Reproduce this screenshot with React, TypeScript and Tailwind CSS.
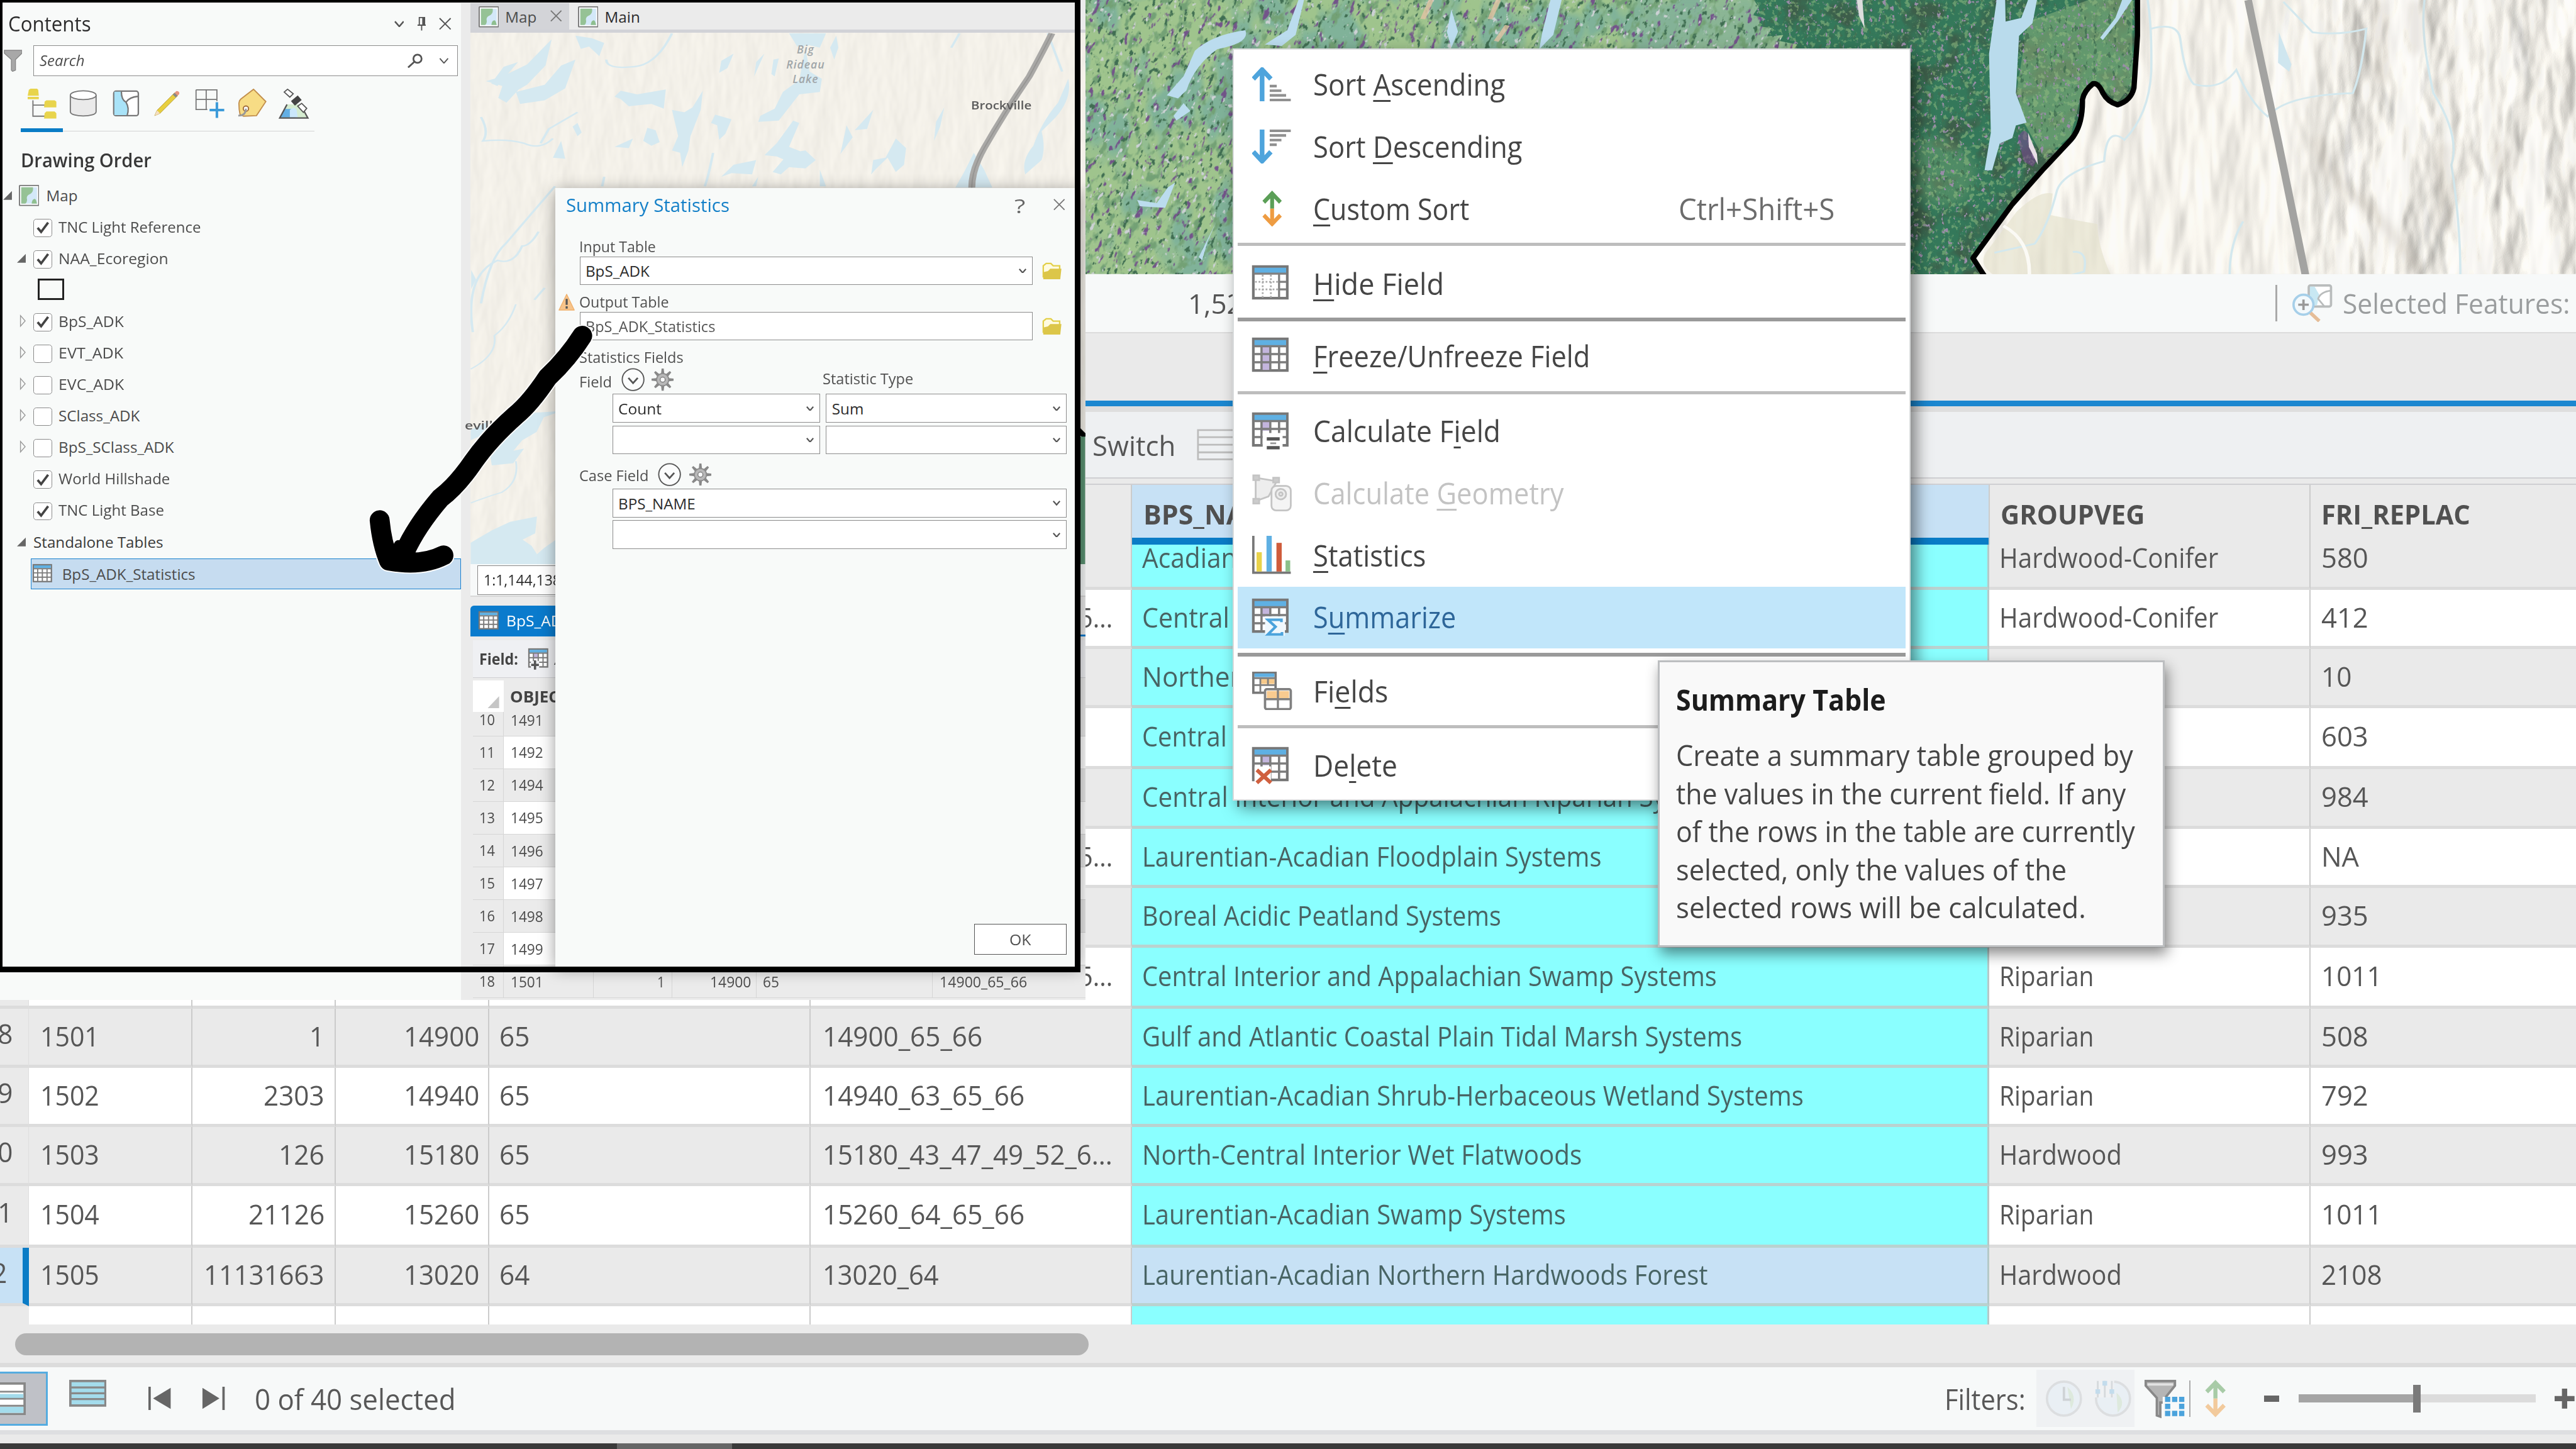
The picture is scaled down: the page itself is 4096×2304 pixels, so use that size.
import { useLayoutEffect, useRef } from "react";
import type { ReactNode } from "react";

function Fit({ w, className = "", children }: { w: number; className?: string; children: ReactNode }) {
  const outer = useRef<HTMLSpanElement>(null);
  const inner = useRef<HTMLSpanElement>(null);
  useLayoutEffect(() => {
    if (outer.current && inner.current) {
      inner.current.style.transform = `scaleX(${outer.current.offsetWidth / inner.current.offsetWidth})`;
    }
  }, [w, children]);
  return (
    <span ref={outer} className={`block shrink-0 whitespace-nowrap ${className}`} style={{ width: w }}>
      <span ref={inner} className="inline-block origin-left whitespace-pre">
        {children}
      </span>
    </span>
  );
}

/* ---------- small icons ---------- */
function Chevron({ className = "", sw = 2 }: { className?: string; sw?: number }) {
  return (
    <svg viewBox="0 0 16 10" className={className} fill="none" stroke="#555" strokeWidth={sw}>
      <path d="M1 1l7 8 7-8" />
    </svg>
  );
}
function Cross({ className = "", color = "#555" }: { className?: string; color?: string }) {
  return (
    <svg viewBox="0 0 20 20" className={className} fill="none" stroke={color} strokeWidth="2">
      <path d="M1 1l18 18M19 1L1 19" />
    </svg>
  );
}
function MapIcon({ className = "" }: { className?: string }) {
  return (
    <svg viewBox="0 0 35 36" className={`h-[36px] w-[35px] shrink-0 ${className}`}>
      <rect x="1" y="1" width="33" height="34" rx="1" fill="#fff" stroke="#777" strokeWidth="2" />
      <rect x="4" y="4" width="27" height="28" fill="#d3e8f8" />
      <path d="M4 4h20c1 6-1 10-6 12-4 2-5 5-4 9 0 3-1 6-3 7H4z" fill="#95c295" />
      <path d="M22 32c0-4 2-8 5-8 2 0 3 4 4 8z" fill="#8fbf8f" />
    </svg>
  );
}
type TableKind = "plain" | "hide" | "freeze" | "calc" | "sum" | "delete" | "add";
function TableIcon({ kind = "plain", className = "" }: { kind?: TableKind; className?: string }) {
  return (
    <svg viewBox="0 0 62 62" preserveAspectRatio="none" className={`shrink-0 overflow-visible ${className}`}>
      <rect x="2" y="2" width="58" height="54" fill="#fff" stroke="#777" strokeWidth="4.500" />
      <rect x="4" y="4" width="54" height="9" fill="#5fb0e3" />
      {kind === "hide" ? (
        <>
          <path d="M4 14h54M46 15v40M46 28h12M46 41h12" stroke="#808080" strokeWidth="3.500" fill="none" />
          <path d="M18 16v40M32 16v40M5 28h40M5 41h40" stroke="#aaa" strokeWidth="3" strokeDasharray="3 3" fill="none" />
        </>
      ) : (
        <>
          {kind !== "plain" && <rect x="16" y="15" width="14" height={kind === "freeze" ? 40 : 16} fill="#c3b5dd" />}
          <path d="M3 14.500h56M3 28h56M3 42h56M16 15v41M31 15v41M46 15v41" stroke="#7c7c7c" strokeWidth="3.800" fill="none" />
        </>
      )}
      {kind === "calc" && (
        <>
          <path d="M18 35h34v28H18z" fill="#fff" />
          <path d="M25 45h22M25 60h22" stroke="#555" strokeWidth="5.500" />
          <path d="M31 52.500h10" stroke="#999" strokeWidth="3" />
        </>
      )}
      {kind === "sum" && (
        <>
          <path d="M22 30h34v33H22z" fill="#f0f8fd" />
          <path d="M50 40v-4H27l13 12-13 13h24v-4" fill="none" stroke="#4ba3dc" strokeWidth="4.500" />
        </>
      )}
      {kind === "delete" && (
        <>
          <path d="M4 33h28v28H4z" fill="#fff" />
          <path d="M8 39l24 22M32 39L8 61" stroke="#d0603f" strokeWidth="6.500" />
        </>
      )}
      {kind === "add" && (
        <>
          <path d="M8 38h26v22H8z" fill="#eff0f3" />
          <path d="M21 36v28M9 50h24" stroke="#555" strokeWidth="7" />
        </>
      )}
    </svg>
  );
}
function SortIcon({ down = false }: { down?: boolean }) {
  return (
    <svg viewBox="0 0 66 58" className="h-[58px] w-[66px]">
      <g transform={down ? "translate(0 58) scale(1 -1)" : undefined}>
        <path d="M17 58V6M2 20L17 4l15 16" fill="none" stroke="#4ea4dc" strokeWidth="8" />
        <path d="M30 56h36M30 48h28M30 40h20M30 32h12" stroke="#909090" strokeWidth="4.500" />
      </g>
    </svg>
  );
}
function UpDown({ className = "" }: { className?: string }) {
  return (
    <svg viewBox="0 0 38 62" preserveAspectRatio="none" className={className} fill="none" strokeWidth="7">
      <path d="M19 31V6M4 20L19 5l15 15" stroke="#5b9f57" />
      <path d="M19 31v25M4 42l15 15 15-15" stroke="#ee9c42" />
    </svg>
  );
}
function GeometryIcon() {
  return (
    <svg viewBox="0 0 68 64" className="h-[64px] w-[68px]" fill="#ededed" stroke="#c4c4c4" strokeWidth="3">
      <path d="M6 6v40l22-8 14-26z" />
      <path d="M2 2h10v8H2zM36 6h10v8H36zM2 42h10v8H2z" fill="#ccc" />
      <rect x="33" y="20" width="33" height="42" rx="8" fill="#f4f4f4" />
      <circle cx="49" cy="34" r="9" />
      <circle cx="49" cy="34" r="3" />
    </svg>
  );
}
function BarsIcon() {
  return (
    <svg viewBox="0 0 66 66" className="h-[66px] w-[66px]">
      <path d="M2 0v63h64" fill="none" stroke="#777" strokeWidth="4" />
      <path d="M12 28v33" stroke="#e9d24a" strokeWidth="9" />
      <path d="M29 0v61" stroke="#5fb0e3" strokeWidth="9" />
      <path d="M46 12v49" stroke="#cf5c3c" strokeWidth="9" />
      <path d="M61 42v19" stroke="#8cc08a" strokeWidth="8" />
    </svg>
  );
}
function FieldsIcon() {
  return (
    <svg viewBox="0 0 68 66" className="h-[66px] w-[68px]" strokeWidth="4">
      <rect x="2" y="2" width="38" height="34" fill="#fff" stroke="#777" />
      <path d="M4 6h34" stroke="#5fb0e3" strokeWidth="6" />
      <path d="M14 12h24v9H14z" fill="#f6c98b" />
      <path d="M3 11h37M3 23h37M14 11v25M27 11v12" stroke="#808080" strokeWidth="3" fill="none" />
      <rect x="22" y="30" width="44" height="34" rx="3" fill="#fff" stroke="#808080" />
      <path d="M25 33h38v12H25z" fill="#f9cb90" />
      <path d="M23 47h42M44 31v33" stroke="#808080" strokeWidth="3.500" />
    </svg>
  );
}
function Folder() {
  return (
    <svg viewBox="0 0 35 30" className="h-[30px] w-[35px] shrink-0">
      <path d="M2 26V6l5-4h8l4 4h11v7" fill="#fffbe0" stroke="#e3d04a" strokeWidth="2.500" />
      <path d="M2 29V17l8-2 4-4h19l-2 18z" fill="#dcc649" />
    </svg>
  );
}
function Gear() {
  return (
    <svg viewBox="-20 -20 40 40" className="h-[38px] w-[38px]">
      {[0, 45, 90, 135].map((a) => (
        <path key={a} d="M-1-19h2L3 0 1 19h-2L-3 0z" fill="#888" stroke="#888" strokeWidth="2" transform={`rotate(${a})`} />
      ))}
      <circle r="12" fill="#8c8c8c" />
      <circle r="10" fill="#b8b8b8" />
      <circle r="4.500" fill="#f8f9f9" stroke="#777" strokeWidth="1.500" />
    </svg>
  );
}
function CircleChevron() {
  return (
    <svg viewBox="0 0 40 40" className="h-[40px] w-[40px]" fill="none" stroke="#555">
      <circle cx="20" cy="20" r="18.500" strokeWidth="2" fill="#fbfcfc" />
      <path d="M12 17l8 9 8-9" strokeWidth="3" />
    </svg>
  );
}

/* ---------- maps ---------- */
function Noise({ id, fx, fy, seed, rgb, k, t }: { id: string; fx: number; fy: number; seed: number; rgb: [number, number, number]; k: number; t: number }) {
  return (
    <filter id={id} x="0" y="0" width="100%" height="100%" colorInterpolationFilters="sRGB">
      <feTurbulence type="fractalNoise" baseFrequency={`${fx} ${fy}`} numOctaves="3" seed={seed} />
      <feColorMatrix type="matrix" values={`0 0 0 0 ${rgb[0]} 0 0 0 0 ${rgb[1]} 0 0 0 0 ${rgb[2]} ${k} 0 0 0 ${-k * t}`} />
      <feComposite in2="SourceGraphic" operator="in" />
    </filter>
  );
}
function LandCoverMap() {
  const dark = "M2996 0H3650V61L3645 147Q3642 176 3617 180Q3600 176 3594 162Q3586 142 3575 144L3558 168L3552 202L3537 239L3491 288L3437 349L3370 441L3390 470H3100V100L3060 90 3070 76 3040 70 3046 60 3018 62 3026 48 3002 44 3012 30 2994 26 3004 12z";
  return (
    <svg viewBox="0 0 4400 468" className="block h-[468px] w-[4400px] shrink-0">
      <defs>
        <Noise id="teal" fx={0.014} fy={0.008} seed={4} rgb={[0.5, 0.7, 0.6]} k={7} t={0.47} />
        <Noise id="olive" fx={0.07} fy={0.045} seed={9} rgb={[0.45, 0.63, 0.46]} k={6} t={0.54} />
        <Noise id="purple" fx={0.1} fy={0.045} seed={21} rgb={[0.45, 0.33, 0.54]} k={12} t={0.655} />
        <Noise id="deep" fx={0.12} fy={0.07} seed={33} rgb={[0.25, 0.43, 0.32]} k={12} t={0.64} />
        <Noise id="pink" fx={0.12} fy={0.07} seed={45} rgb={[0.8, 0.82, 0.83]} k={12} t={0.68} />
        <Noise id="fleck" fx={0.11} fy={0.11} seed={51} rgb={[0.6, 0.76, 0.52]} k={9} t={0.56} />
        <Noise id="spark" fx={0.13} fy={0.1} seed={61} rgb={[0.6, 0.55, 0.66]} k={12} t={0.67} />
        <Noise id="shade" fx={0.02} fy={0.02} seed={71} rgb={[0.24, 0.37, 0.29]} k={5} t={0.5} />
        <filter id="relief" x="0" y="0" width="100%" height="100%" colorInterpolationFilters="sRGB">
          <feTurbulence type="fractalNoise" baseFrequency="0.018 0.005" numOctaves="3" seed="12" result="n" />
          <feDiffuseLighting in="n" surfaceScale="5" diffuseConstant="1.15" lightingColor="#f8f5ee" result="l">
            <feDistantLight azimuth="190" elevation="60" />
          </feDiffuseLighting>
          <feComposite in="l" in2="SourceGraphic" operator="in" />
        </filter>
        <filter id="ridge" x="0" y="0" width="100%" height="100%" colorInterpolationFilters="sRGB">
          <feTurbulence type="fractalNoise" baseFrequency="0.009 0.004" numOctaves="4" seed="31" result="n" />
          <feDiffuseLighting in="n" surfaceScale="22" diffuseConstant="1.15" lightingColor="#f7f4ed" result="l">
            <feDistantLight azimuth="190" elevation="60" />
          </feDiffuseLighting>
          <feComposite in="l" in2="SourceGraphic" operator="in" />
        </filter>
        <linearGradient id="rise" x1="0" x2="1">
          <stop offset="0" stopColor="#fff" stopOpacity="0" />
          <stop offset=".3" stopColor="#fff" stopOpacity="1" />
        </linearGradient>
        <filter id="edge"><feGaussianBlur stdDeviation="12" /></filter>
      </defs>
      <rect width="3300" height="468" fill="#9fc48d" />
      <rect x="1800" width="1400" height="468" filter="url(#teal)" />
      <path d="M2800 0h230v100h-240z" fill="#86b297" opacity=".8" filter="url(#edge)" />
      <g transform="rotate(24 2200 200)">
        <rect x="1600" y="-600" width="1500" height="1400" filter="url(#olive)" />
        <rect x="1600" y="-600" width="1500" height="1400" filter="url(#deep)" />
        <rect x="1600" y="-600" width="1500" height="1400" filter="url(#purple)" />
        <rect x="1600" y="-600" width="1500" height="1400" filter="url(#pink)" />
      </g>
      <rect x="3300" width="1100" height="468" fill="#f3f0e8" />
      <rect x="3300" width="1100" height="468" filter="url(#relief)" opacity=".7" />
      <rect x="3860" width="540" height="468" fill="url(#rise)" filter="url(#ridge)" opacity=".5" />
      <path d={dark} fill="#34785a" />
      <path d={dark} filter="url(#shade)" />
      <path d={dark} filter="url(#fleck)" opacity=".5" />
      <g transform="translate(3200 0) scale(.7653 .6122)">
        <path d="M345 60L480 0H578V235L545 285 490 225 462 275 440 380 380 440 335 340 320 250z" fill="#8fb87f" opacity=".5" />
        <path d="M90 400q60-40 110 20t0 140q-60 30-100-20z" fill="#8fb87f" opacity=".3" filter="url(#edge)" />
      </g>
      <path d={dark} filter="url(#deep)" opacity=".8" />
      <path d={dark} filter="url(#spark)" />
      <g transform="translate(3200 0) scale(.7653 .6122)">
        <path d="M275 0L258 150 262 370 248 475H265L282 400 310 385 318 350 342 342 318 260 325 100 355 65 365 0H345L330 50 295 60 294 0z" fill="#b9dbec" />
        <path d="M555 0h22L545 60 512 112 506 105 540 50z" fill="#b9dbec" />
        <path d="M322 385q16-40 26 0l18 60-10 20-20-14z" fill="#744a8e" opacity=".6" />
        <path d="M345 370l20 60 2 30-20-50z" fill="#e8dfe6" />
        <path d="M320 590q50-60 80-50l-5 60 60 15 45 10q0 60 30 143H270q-40-30-15-70z" fill="#e6e2cf" opacity=".7" />
        <g fill="none" stroke="#d3e8ee" strokeWidth="5">
          <path d="M612 0q10 80 8 200-5 120-60 190-40-40-45 60-90 30-105 80-20 100-50 150l-90 25" />
          <path d="M620 80q60-20 65 30 10 100 30 125 60 20 95-40 30 90 70 130 40-60 190-65 20-60 30-180-60 20-120 10L915 5" />
          <path d="M1230 0q-10 100 20 260 60 120 40 200 20 160 20 308M795 768q0-90 30-150M440 768l30-10q10-60-25-55" />
        </g>
        <path d="M905 90l28 90-5 20-25-25z" fill="#cfe6ef" />
        <path d="M290 630q60 40 58 138" fill="none" stroke="#fbfaf5" strokeWidth="8" />
        <g fill="none" stroke="#a99f92" strokeWidth="22" opacity=".35" filter="url(#edge)">
          <path d="M1130 0l5 230M1270 400l5 240M990 380q20 130 110 190 60 80 120 190M1210 0v150M1395 400v90" />
        </g>
      </g>
      <path d="M3840 0L3850 49L3892 245L3938 470" fill="none" stroke="#a3a3a1" strokeWidth="13" />
      <path d="M3651 -5V61L3645 150Q3640 172 3617 179Q3600 174 3592 159Q3584 141 3575 143Q3560 155 3557 170Q3558 215 3537 239L3491 288L3437 349L3370 441L3390 472" fill="none" stroke="#000" strokeWidth="9" strokeLinejoin="round" />
      <g transform="translate(1840 0) scale(.9566 .5421)" fill="#bbdcee">
        <path d="M300 95q10 40-50 60-40 50-55 130l-15 25-20-10 30-60 20-80q30-50 90-65zM190 325l12 25-25 30-5-15zM395 0h10l-15 110-25 35-30-5 40-45zM668 30l12 70-12 50-8-50zM845 0h20l-15 110-25 45 5-50zM175 575l-18 80-45-5-5-20 35 10 20-50zM248 700l-15 60-10 60-6-10z" />
        <path d="M1392 0h10l4 90-10-40z" fill="#ddd" />
      </g>
      <g transform="translate(1840 0) scale(.9566 .5421)" fill="none" stroke="#e2c3a4" strokeWidth="9" opacity=".8">
        <path d="M632 0l-15 60M752 0l-15 60M768 80l-20 50" />
      </g>
    </svg>
  );
}
function StreetMap() {
  return (
    <svg viewBox="0 0 1050 908" className="block h-[908px] w-[1050px] shrink-0">
      <defs>
        <filter id="soft" x="0" y="0" width="100%" height="100%" colorInterpolationFilters="sRGB">
          <feTurbulence type="fractalNoise" baseFrequency="0.03 0.012" numOctaves="3" seed="5" result="n" />
          <feDiffuseLighting in="n" surfaceScale="1.2" diffuseConstant="1.120" lightingColor="#f6f3ec">
            <feDistantLight azimuth="200" elevation="62" />
          </feDiffuseLighting>
        </filter>
      </defs>
      <rect width="1050" height="908" fill="#f4f1e9" />
      <rect width="1050" height="908" filter="url(#soft)" opacity=".4" />
      <g transform="translate(-24 -56) scale(.7015 .4082)" fill="#d5e9f1">
        <path d="M290 150l40 10 30 20-12 55-25-40-20 10zM232 165l-15 110-45 80-20 20-30 55-20-20 10-50-40-20 40-20 60-50 40-70zM290 250l-25 120-50 50-60 15-10-50 70-30 40-80zM150 260l-50 100-15-10 30-70zM385 405l15-25 40 15 70-20-5 80-30-20-55 10-20-30zM675 225l-15 60-20 20 5-50zM750 225l-25 95 5-60zM785 245l-10 75-8-10 5-60zM810 140h90l-15 60-25-10-30 5zM925 150l5 50-10 50-10-50z" />
        <path d="M850 200l10 100 30 30-5 55-50 10-50 110-50 5 5-25 35-30 20-70 40-50zM600 380l-5 80-25 110-5 60-15 70-5-60-20-10 15-60-15-110 30 10 20-20zM630 480l40 20-15 60-15 25-5-60-15-10zM820 505l15 10-25 100 30 20-20 50-40-30-30-5 30-50zM850 630l25 40-25 35-40-5-20 30-20-10 40-80zM730 670l-10 60-50-5-25 15 30-50zM465 535l20 10 10 50-20 15-20-20zM1015 460l-15 80-30 5zM950 525l15 50-30 70zM1070 580l25 40-5 70-20 30-20-60-30 50-10 20 5-60 30-10zM1188 450l-10 80-15 60 5-80zM295 515l10 40-10 15-12-40zM430 580l-10 40-35-5zM255 590l-20 70 30 5" />
        <path d="M1260 640l25 70 20 75H1215l20-60zM1490 330q10 80-30 160l-35 60q10 70 0 120l-40 60q-10-60 20-120 20-100 60-180zM735 740l-15 40 10 0zM885 710l15 70h-15z" />
        <g fill="none" stroke="#d5e9f1" strokeWidth="6">
          <path d="M295 470l-70 70-20 60M625 640q-10 90-20 140M60 490q20 60 5 100 60-10 100 10 40 30 70-20M240 780q-80 160-120 240-40 60-60 250M200 970q-20 60-40 60-20 80-60 60-80 60-60 300M215 1205l-25 50M525 140q-40 140-100 140-60 10-60-30M1440 140l35 160M360 740l-5 40M1225 140l-20 60" />
        </g>
        <path d="M1450 140q-20 70-55 180-60 150-110 300-30 90-30 165" fill="none" stroke="#a9a8a6" strokeWidth="17" />
        <path d="M1450 140q-20 70-55 180-60 150-110 300-30 90-30 165" fill="none" stroke="#969593" strokeWidth="3" />
        <path d="M36 1130l12 40-12 40z" />
      </g>
      <g transform="translate(-804 464) scale(.6122 .3571)" fill="#d5e9f1">
        <path d="M1568 510l-50 30-20 70-40 40-25 50 30-10-30 70-60 10-5-50 40-120 70-80zM1314 600l50-40-10 60-40 30zM1314 1140l60-60 50-40 75-25-5 80-35 30 25 30 15 40 20-30 50-60V1250H1314z" />
        <path d="M1440 0q-20 100-60 150 10 90-66 160M1440 750q10 100-40 150-40 20-86 50" fill="none" stroke="#d5e9f1" strokeWidth="5" />
      </g>
      <path d="M1030 670l20 20" stroke="#000" strokeWidth="9" />
      <path d="M1036 690h14v218h-14z" fill="#5c9474" />
    </svg>
  );
}

/* ---------- main attribute table ---------- */
type Cell = { t: string; w: number };
type Row = { i: string; id?: string; c?: Cell; v?: string; p?: string; key?: Cell; name: Cell; g?: Cell; fri: Cell; h: number; alt: boolean; first?: boolean; sel?: boolean };
const HC = { t: "Hardwood-Conifer", w: 374 };
const RIP = { t: "Riparian", w: 162 };
const HW = { t: "Hardwood", w: 209 };
const CUT = { t: "5...", w: 58 };
const rows: Row[] = [
  { i: "", name: { t: "Acadian Low-Elevation Hardwood Forest", w: 820 }, g: HC, fri: { t: "580", w: 80 }, h: 78, alt: true, first: true },
  { i: "", key: CUT, name: { t: "Central Interior and Appalachian Forest", w: 810 }, g: HC, fri: { t: "412", w: 80 }, h: 101, alt: false },
  { i: "", name: { t: "Northern Appalachian Spruce-Fir Forest", w: 840 }, fri: { t: "10", w: 52 }, h: 101, alt: true },
  { i: "", name: { t: "Central Appalachian Pine Woodland", w: 715 }, fri: { t: "603", w: 80 }, h: 104, alt: false },
  { i: "", name: { t: "Central Interior and Appalachian Riparian Systems", w: 1016 }, fri: { t: "984", w: 80 }, h: 102, alt: true },
  { i: "", key: CUT, name: { t: "Laurentian-Acadian Floodplain Systems", w: 785 }, fri: { t: "NA", w: 64 }, h: 101, alt: false },
  { i: "", name: { t: "Boreal Acidic Peatland Systems", w: 613 }, fri: { t: "935", w: 80 }, h: 102, alt: true },
  { i: "", key: CUT, name: { t: "Central Interior and Appalachian Swamp Systems", w: 982 }, g: RIP, fri: { t: "1011", w: 104 }, h: 104, alt: false },
  { i: "18", id: "1501", c: { t: "1", w: 25 }, v: "14900", p: "65", key: { t: "14900_65_66", w: 273 }, name: { t: "Gulf and Atlantic Coastal Plain Tidal Marsh Systems", w: 1025 }, g: RIP, fri: { t: "508", w: 80 }, h: 101, alt: true },
  { i: "19", id: "1502", c: { t: "2303", w: 104 }, v: "14940", p: "65", key: { t: "14940_63_65_66", w: 345 }, name: { t: "Laurentian-Acadian Shrub-Herbaceous Wetland Systems", w: 1130 }, g: RIP, fri: { t: "792", w: 80 }, h: 101, alt: false },
  { i: "20", id: "1503", c: { t: "126", w: 78 }, v: "15180", p: "65", key: { t: "15180_43_47_49_52_6...", w: 495 }, name: { t: "North-Central Interior Wet Flatwoods", w: 751 }, g: HW, fri: { t: "993", w: 80 }, h: 101, alt: true },
  { i: "21", id: "1504", c: { t: "21126", w: 130 }, v: "15260", p: "65", key: { t: "15260_64_65_66", w: 345 }, name: { t: "Laurentian-Acadian Swamp Systems", w: 724 }, g: RIP, fri: { t: "1011", w: 104 }, h: 105, alt: false },
  { i: "22", id: "1505", c: { t: "11131663", w: 206 }, v: "13020", p: "64", key: { t: "13020_64", w: 198 }, name: { t: "Laurentian-Acadian Northern Hardwoods Forest", w: 966 }, g: HW, fri: { t: "2108", w: 104 }, h: 100, alt: true, sel: true },
];

function BodyCell({ row, className = "", children }: { row: Row; className?: string; children?: ReactNode }) {
  return (
    <div className={`flex shrink-0 items-center overflow-hidden border-r-[3px] border-b-[6px] border-r-[#cbcbcb] border-b-[#dcdcdc] ${row.alt ? "bg-[#eaeaea]" : "bg-white"} ${row.first ? "pb-[29px]" : "pb-[3px]"} ${className}`}>
      {children}
    </div>
  );
}
function MainTable() {
  return (
    <div className="flex h-[1434px] shrink-0 flex-col overflow-hidden bg-[#eaeaea] text-[48px] leading-none text-[#565656]">
      <div className="flex h-[102px] shrink-0 text-[47px] font-bold text-[#505050]">
        <div className="w-[1934px] shrink-0 border-r-[3px] border-[#cbcbcb]" />
        <div className="flex w-[1463px] shrink-0 items-center border-b-[12px] border-[#0a7cc6] bg-[#c7e1f5] pt-[12px] pl-[19px]">
          <Fit w={243}>BPS_NAME</Fit>
        </div>
        <div className="flex w-[550px] shrink-0 items-center border-x-[3px] border-[#cbcbcb] pl-[18px]">
          <Fit w={246}>GROUPVEG</Fit>
        </div>
        <div className="flex items-center pl-[18px]">
          <Fit w={254}>FRI_REPLAC</Fit>
        </div>
      </div>
      {rows.map((r, n) => (
        <div key={n} className="flex shrink-0" style={{ height: r.h }}>
          <div className={`flex w-[49px] shrink-0 items-center justify-end border-b-[6px] border-b-[#dcdcdc] pr-[26px] pb-[10px] ${r.sel ? "border-r-[11px] border-r-[#0a7cc6] bg-[#c7e1f5] pr-[19px]" : "border-r-[2px] border-r-[#dfdfdf]"}`}>
            <Fit w={52}>{r.i || " "}</Fit>
          </div>
          <BodyCell row={r} className="w-[280px] pl-[20px]">{r.id && <Fit w={101}>{r.id}</Fit>}</BodyCell>
          <BodyCell row={r} className="w-[245px] justify-end pr-[18px]">{r.c && <Fit w={r.c.w}>{r.c.t}</Fit>}</BodyCell>
          <BodyCell row={r} className="w-[262px] justify-end pr-[15px]">{r.v && <Fit w={129}>{r.v}</Fit>}</BodyCell>
          <BodyCell row={r} className="w-[549px] pl-[17px]">{r.p && <Fit w={52}>{r.p}</Fit>}</BodyCell>
          <BodyCell row={r} className={`w-[549px] ${r.key === CUT ? "justify-end pr-[32px]" : "pl-[20px]"}`}>{r.key && <Fit w={r.key.w}>{r.key.t}</Fit>}</BodyCell>
          <div className={`flex w-[1464px] shrink-0 items-center overflow-hidden border-r-[4px] border-b-[6px] border-r-[#b5c9c8] border-b-[#b9d2d0] pl-[17px] text-[#486464] ${r.sel ? "bg-[#c7e1f5]" : "bg-[#8affff]"} ${r.first ? "pb-[29px]" : "pb-[3px]"}`}>
            <Fit w={r.name.w}>{r.name.t}</Fit>
          </div>
          <BodyCell row={r} className="w-[549px] pl-[17px]">{r.g && <Fit w={r.g.w}>{r.g.t}</Fit>}</BodyCell>
          <BodyCell row={r} className="w-[457px] pl-[18px]"><Fit w={r.fri.w}>{r.fri.t}</Fit></BodyCell>
        </div>
      ))}
      <div className="flex h-[31px] shrink-0">
        <div className="w-[49px]" />
        <div className="w-[280px] border-r-[3px] border-[#cbcbcb] bg-white" />
        <div className="w-[245px] border-r-[3px] border-[#cbcbcb] bg-white" />
        <div className="w-[262px] border-r-[3px] border-[#cbcbcb] bg-white" />
        <div className="w-[549px] border-r-[3px] border-[#cbcbcb] bg-white" />
        <div className="w-[549px] border-r-[3px] border-[#cbcbcb] bg-white" />
        <div className="w-[1464px] border-r-[4px] border-[#b5c9c8] bg-[#8affff]" />
        <div className="w-[549px] border-r-[3px] border-[#cbcbcb] bg-white" />
        <div className="w-[453px] bg-white" />
      </div>
    </div>
  );
}

function StatusBar() {
  return (
    <div className="flex h-[101px] shrink-0 items-center border-b-[3px] border-[#dcdcdc] bg-[#f7f9f9] text-[48px] text-[#555]">
      <div className="w-[2029px] shrink-0" />
      <div className="w-[1858px] shrink-0"><Fit w={120}>1,523</Fit></div>
      <div className="h-[62px] w-[3px] bg-[#aaa]" />
      <svg viewBox="0 0 70 66" className="ml-[26px] h-[66px] w-[70px] shrink-0" fill="none">
        <rect x="28" y="3" width="38" height="36" rx="3" stroke="#b9bcbc" strokeWidth="4" fill="#fff" />
        <path d="M30 5h8l8 14-4 18H30z" fill="#c8e8f3" />
        <path d="M66 12q-18 2-22 14l10 12" stroke="#b9bcbc" strokeWidth="3" />
        <circle cx="19" cy="36" r="17" stroke="#a6cfe9" strokeWidth="4" fill="#f3f9fc" />
        <path d="M19 27v18M10 36h18" stroke="#999" strokeWidth="4" />
        <path d="M31 50l15 14" stroke="#e5bd98" strokeWidth="6" />
      </svg>
      <Fit w={388} className="ml-[15px] text-[#9a9d9e]">Selected Features:</Fit>
    </div>
  );
}

function FooterBar() {
  return (
    <div className="flex h-[108px] shrink-0 items-center bg-[#f7f9f9] text-[49px] text-[#585858]">
      <div className="flex h-[93px] w-[82px] items-center border-[4px] border-l-0 border-[#55ace0] bg-[#bfc1c7]">
        <svg viewBox="0 0 46 56" className="h-[56px] w-[46px]">
          <path d="M-4 2h46v52H-4z" fill="#fff" stroke="#888" strokeWidth="4" />
          <path d="M0 20h40v9H0zM0 42h40v10H0z" fill="#a4dcec" />
          <path d="M0 16h42M0 28h42M0 40h42" stroke="#888" strokeWidth="3" />
        </svg>
      </div>
      <svg viewBox="0 0 64 46" className="mb-[18px] ml-[36px] h-[46px] w-[64px]">
        <path d="M2 2h60v42H2z" fill="#a4dcec" stroke="#888" strokeWidth="4" />
        <path d="M2 13h60M2 23h60M2 33h60" stroke="#888" strokeWidth="3.500" />
      </svg>
      <svg viewBox="0 0 40 40" className="ml-[71px] h-[40px] w-[40px]" fill="#666">
        <path d="M0 0h4v40H0zM38 2v36L8 20z" />
      </svg>
      <svg viewBox="0 0 40 40" className="ml-[52px] h-[40px] w-[40px]" fill="#666">
        <path d="M35 0h4v40h-4zM1 2v36l29-18z" />
      </svg>
      <Fit w={343} className="ml-[50px]">0 of 40 selected</Fit>
      <Fit w={138} className="ml-[2544px]">Filters:</Fit>
      <div className="ml-[18px] flex h-[98px] w-[168px] shrink-0 items-center gap-[20px] bg-[#eff1f3] pl-[15px]">
        <svg viewBox="0 0 64 64" className="h-[64px] w-[64px]" fill="none">
          <circle cx="32" cy="32" r="29" stroke="#dcdee0" strokeWidth="4" fill="#e9eff4" />
          <path d="M38 12q18 16 6 38z" fill="#dde9dd" />
          <path d="M32 12v22h12" stroke="#cfd3d6" strokeWidth="4" />
        </svg>
        <svg viewBox="0 0 64 64" className="h-[64px] w-[64px]" fill="none">
          <circle cx="32" cy="32" r="29" stroke="#dcdee0" strokeWidth="4" fill="#e9eff4" />
          <path d="M0 0h34v30H0z" fill="#eff1f3" />
          <path d="M38 22q18 16 2 34z" fill="#dde9dd" />
          <path d="M6 2v28M18 2v28M30 2v28" stroke="#d5d9dc" strokeWidth="3" />
          <path d="M18 2v8M6 16v8M30 16v8" stroke="#c3dcec" strokeWidth="8" />
        </svg>
      </div>
      <svg viewBox="0 0 70 66" className="ml-[16px] h-[66px] w-[70px] shrink-0" fill="none">
        <path d="M3 3h50v8L36 32v8h-8v24l-6-2V32L3 11z" fill="#b5b5b5" stroke="#888" strokeWidth="4" />
        <path d="M6 9h44" stroke="#e2e2e2" strokeWidth="4" />
        <path d="M32 30h38v36H32z" fill="#f7f9f9" />
        <path d="M36 30h9v9h-9zM48 30h9v9h-9zM60 30h9v9h-9zM36 42h9v9h-9zM60 42h9v9h-9zM36 54h9v9h-9zM48 54h9v9h-9zM60 54h9v9h-9z" fill="#4ba3dc" />
      </svg>
      <div className="ml-[7px] h-[62px] w-[3px] bg-[#aaa]" />
      <UpDown className="ml-[23px] h-[64px] w-[38px] opacity-50" />
      <div className="ml-[64px] h-[10px] w-[26px] bg-[#666]" />
      <div className="relative ml-[33px] h-[14px] w-[405px] bg-[#dcdcdc]">
        <div className="h-[14px] w-[200px] bg-[#a5a5a5]" />
        <div className="absolute -top-[17px] left-[196px] h-[48px] w-[13px] bg-[#7a7a7a]" />
      </div>
      <svg viewBox="0 0 34 34" className="ml-[33px] h-[34px] w-[34px] shrink-0">
        <path d="M17 0v34M0 17h34" stroke="#666" strokeWidth="9" />
      </svg>
    </div>
  );
}

/* ---------- context menu ---------- */
type Item = { a?: string; u: string; b?: string; w: number; icon: ReactNode; short?: string; off?: boolean; hot?: boolean };
function MenuItem({ a = "", u, b = "", w, icon, short, off, hot }: Item) {
  return (
    <div className={`flex h-[106px] shrink-0 items-center pb-[2px] pl-[25px] ${hot ? "bg-[#c1e6fa] text-[#2e6699]" : off ? "text-[#c3c3c3]" : "text-[#454545]"}`}>
      <div className="flex w-[104px] shrink-0 items-center">{icon}</div>
      <Fit w={w}>
        {a}
        <span className="underline decoration-[3px] underline-offset-[7px]">{u}</span>
        {b}
      </Fit>
      {short && <Fit w={267} className="mr-[121px] ml-auto text-[#6c6c6c]">{short}</Fit>}
    </div>
  );
}
function Sep({ dark = false, pt, pb }: { dark?: boolean; pt: string; pb: string }) {
  return (
    <div className={`${pt} ${pb}`}>
      <div className={dark ? "h-[7px] bg-[#9a9a9a]" : "h-[5px] bg-[#bdbdbd]"} />
    </div>
  );
}
const ti = "h-[62px] w-[62px]";
function ContextMenu() {
  return (
    <div className="absolute top-[83px] left-[2106px] flex h-[1284px] w-[1157px] flex-col border-[3px] border-[#d8dbdc] bg-white px-[6px] pt-[7px] text-[51px] leading-none shadow-[10px_12px_26px_rgba(0,0,0,0.5)]">
      <MenuItem a="Sort " u="A" b="scending" w={328} icon={<SortIcon />} />
      <MenuItem a="Sort " u="D" b="escending" w={357} icon={<SortIcon down />} />
      <MenuItem u="C" b="ustom Sort" w={267} icon={<UpDown className="ml-[16px] h-[62px] w-[36px]" />} short="Ctrl+Shift+S" />
      <Sep pt="pt-[5px]" pb="pb-[12px]" />
      <MenuItem u="H" b="ide Field" w={223} icon={<TableIcon kind="hide" className={ti} />} />
      <Sep dark pt="pt-[4px]" pb="pb-[7px]" />
      <MenuItem u="F" b="reeze/Unfreeze Field" w={473} icon={<TableIcon kind="freeze" className={ti} />} />
      <Sep pt="pt-[6px]" pb="pb-[11px]" />
      <MenuItem a="Calculate F" u="i" b="eld" w={320} icon={<TableIcon kind="calc" className={ti} />} />
      <MenuItem a="Calculate " u="G" b="eometry" w={428} icon={<GeometryIcon />} off />
      <MenuItem u="S" b="tatistics" w={193} icon={<BarsIcon />} />
      <MenuItem a="S" u="u" b="mmarize" w={244} icon={<TableIcon kind="sum" className={ti} />} hot />
      <Sep dark pt="pt-[7px]" pb="pb-[6px]" />
      <MenuItem a="Fi" u="e" b="lds" w={128} icon={<FieldsIcon />} />
      <Sep pt="pt-[5px]" pb="pb-[11px]" />
      <MenuItem a="De" u="l" b="ete" w={144} icon={<TableIcon kind="delete" className={ti} />} />
    </div>
  );
}
function Tooltip() {
  return (
    <div className="absolute top-[1128px] left-[2832px] h-[490px] w-[866px] border-[4px] border-[#bcbec0] bg-[#f9f9f9] pl-[28px] text-[50px] leading-[65px] text-[#454545] shadow-[4px_12px_22px_rgba(0,0,0,0.45)]">
      <Fit w={358} className="mt-[31px] mb-[30px] font-bold text-[#1c1c1c]">Summary Table</Fit>
      <Fit w={781}>Create a summary table grouped by</Fit>
      <Fit w={768}>the values in the current field. If any</Fit>
      <Fit w={784}>of the rows in the table are currently</Fit>
      <Fit w={667}>selected, only the values of the</Fit>
      <Fit w={700}>selected rows will be calculated.</Fit>
    </div>
  );
}

/* ---------- contents pane ---------- */
function Check({ on }: { on: boolean }) {
  return (
    <div className="mt-[3px] flex h-[31px] w-[32px] shrink-0 items-center justify-center rounded-[5px] border-[2px] border-[#8a8a8a] bg-white">
      {on && (
        <svg viewBox="0 0 22 22" className="h-[22px] w-[24px]" fill="none" stroke="#444" strokeWidth="4">
          <path d="M2 11l6 7L20 2" />
        </svg>
      )}
    </div>
  );
}
type Arrow = "open" | "closed" | "none";
function Expander({ kind }: { kind: Arrow }) {
  return (
    <svg viewBox="0 0 16 24" className="h-[24px] w-[16px] shrink-0">
      {kind === "open" && <path d="M15 4v15H0z" fill="#666" />}
      {kind === "closed" && <path d="M6 2v18l8-9z" fill="none" stroke="#999" strokeWidth="1.500" />}
    </svg>
  );
}
const layers: { t: string; w: number; on: boolean; a: Arrow; swatch?: boolean }[] = [
  { t: "TNC Light Reference", w: 243, on: true, a: "none" },
  { t: "NAA_Ecoregion", w: 188, on: true, a: "open", swatch: true },
  { t: "BpS_ADK", w: 112, on: true, a: "closed" },
  { t: "EVT_ADK", w: 111, on: false, a: "closed" },
  { t: "EVC_ADK", w: 112, on: false, a: "closed" },
  { t: "SClass_ADK", w: 139, on: false, a: "closed" },
  { t: "BpS_SClass_ADK", w: 197, on: false, a: "closed" },
  { t: "World Hillshade", w: 191, on: true, a: "none" },
  { t: "TNC Light Base", w: 180, on: true, a: "none" },
];
function ToolIcons() {
  return (
    <div className="flex h-[88px] items-start pt-[22px] pl-[42px]">
      <svg viewBox="0 0 50 52" className="h-[52px] w-[50px]">
        <path d="M9 20v27h22M9 28h22" fill="none" stroke="#777" strokeWidth="2" />
        <path d="M2 2l3-2h11l2 2 1 10H0zM0 14h19v4H0zM29 22l3-2h14l3 2v10H28zM29 42l3-3h14l3 3v9H28z" fill="#e8d44c" />
      </svg>
      <svg viewBox="0 0 48 46" className="mt-[2px] ml-[21px] h-[46px] w-[48px]" fill="#eaeaea" stroke="#777" strokeWidth="2">
        <path d="M2 9v28c0 10 44 10 44 0V9" />
        <ellipse cx="24" cy="9" rx="22" ry="7.500" fill="#fff" />
      </svg>
      <svg viewBox="0 0 46 46" className="mt-[2px] ml-[26px] h-[46px] w-[46px]" fill="none" stroke="#777" strokeWidth="2.500">
        <rect x="2" y="2" width="42" height="42" rx="4" fill="#fff" />
        <path d="M3 3h12q0 14 8 18 6 10 2 22H3z" fill="#a9e3f8" stroke="none" />
        <path d="M15 3q0 14 8 18 6 10 2 22M23 21q6-9 20-10" />
      </svg>
      <svg viewBox="0 0 46 46" className="mt-[2px] ml-[25px] h-[46px] w-[46px]">
        <path d="M1 44l4-9 30-30 5 5-30 30z" fill="#e8cf3f" stroke="#b69a30" strokeWidth="1" />
        <path d="M35 5l3-3q6 0 5 5l-3 3z" fill="#e7957f" />
        <path d="M32 8l3-3 5 5-3 3z" fill="#888" />
        <path d="M1 44l4-9 5 5z" fill="#f5dfc4" />
      </svg>
      <svg viewBox="0 0 54 54" className="ml-[23px] h-[52px] w-[54px]" fill="none">
        <path d="M2 2h37v20M2 2v35h20M2 19h37M20 2v35" stroke="#777" strokeWidth="2" />
        <path d="M39 24v28M26 38h26" stroke="#3d9bd9" strokeWidth="4.500" />
      </svg>
      <svg viewBox="0 0 50 50" className="ml-[20px] h-[50px] w-[50px]">
        <path d="M2 25Q2 21 5 18L27 1l21 21-16 24-22 1-6-3q-2-8-2-19z" fill="#f7dc85" stroke="#c28f4d" strokeWidth="2" />
        <circle cx="14" cy="34" r="4.500" fill="#fff" stroke="#a06a35" strokeWidth="2" />
        <path d="M14 34q0 12-13 12" fill="none" stroke="#999" strokeWidth="3" />
      </svg>
      <svg viewBox="0 0 54 54" className="ml-[19px] h-[52px] w-[54px]">
        <path d="M16 28h24l12 24H2z" fill="#d5ecd0" />
        <path d="M10 36h20v15H3z" fill="#63afe4" />
        <path d="M20 38q8-8 12 0l2 13H20z" fill="#cbe7fa" />
        <path d="M15 28L2 52h50L42 34" fill="none" stroke="#555" strokeWidth="2.500" />
        <path d="M22 22l12-10 7 8-12 10z" fill="#444" />
        <path d="M10 6l6-5 10 8-6 6zM34 31l7-5 9 9-6 7z" fill="#fff" stroke="#555" strokeWidth="2" />
      </svg>
    </div>
  );
}
function ContentsPane() {
  return (
    <div className="flex w-[787px] shrink-0 flex-col bg-[#f8faf9] pl-[5px] text-[26px] leading-none text-[#4c4c4c]">
      <div className="flex h-[72px] shrink-0 items-center pl-[9px] text-[35px] text-[#2d2d2d]">
        <Fit w={141}>Contents</Fit>
        <Chevron className="mr-[22px] ml-auto h-[11px] w-[17px]" sw={2.5} />
        <svg viewBox="0 0 16 24" className="mr-[22px] h-[24px] w-[16px]" fill="none" stroke="#555" strokeWidth="2">
          <path d="M4 1h9v13H4zM1 14h14M8 14v9" />
          <path d="M11 1v13" strokeWidth="4" />
        </svg>
        <Cross className="mr-[16px] h-[21px] w-[21px]" />
      </div>
      <div className="flex h-[53px] shrink-0 items-center">
        <svg viewBox="0 0 32 38" className="mr-[19px] ml-[1px] h-[38px] w-[32px]">
          <path d="M1 1h30v5L20 17v18l-5 2-2-2V17L1 6z" fill="#a8a8a8" stroke="#888" strokeWidth="1.500" />
        </svg>
        <div className="flex h-[53px] w-[725px] items-center border-[2px] border-[#8c8c8c] bg-white pl-[10px] italic">
          <Fit w={77}>Search</Fit>
          <svg viewBox="0 0 26 25" className="mr-[28px] ml-auto h-[25px] w-[26px]" fill="none" stroke="#555" strokeWidth="3">
            <circle cx="17" cy="9" r="7" />
            <path d="M12 14L1 24" />
          </svg>
          <Chevron className="mr-[14px] h-[10px] w-[17px]" />
        </div>
      </div>
      <ToolIcons />
      <div className="ml-[30px] flex h-[7px] w-[502px] shrink-0 items-end border-b-[2px] border-[#d4d4d4]">
        <div className="-mb-[2px] h-[7px] w-[72px] bg-[#0a7cc6]" />
      </div>
      <div className="h-[83px] shrink-0 pt-[33px] pl-[31px] text-[32px] font-semibold text-[#383838]">
        <Fit w={223}>Drawing Order</Fit>
      </div>
      <div className="flex h-[53.800px] shrink-0 items-center pb-[2px]">
        <Expander kind="open" />
        <MapIcon className="ml-[11px]" />
        <Fit w={54} className="ml-[12px]">Map</Fit>
      </div>
      {layers.map((l) => (
        <div key={l.t} className="shrink-0">
          <div className="flex h-[53.800px] items-center pb-[2px]">
            <div className="ml-[24px] flex"><Expander kind={l.a} /></div>
            <div className="ml-[12px]"><Check on={l.on} /></div>
            <Fit w={l.w} className="ml-[11px]">{l.t}</Fit>
          </div>
          {l.swatch && (
            <div className="flex h-[53.800px] items-center pb-[4px] pl-[60px]">
              <div className="h-[37px] w-[45px] border-[4px] border-[#222] bg-[#f8faf9]" />
            </div>
          )}
        </div>
      ))}
      <div className="flex h-[53.800px] shrink-0 items-center pl-[24px] text-[#3a3a3a]">
        <Expander kind="open" />
        <Fit w={222} className="ml-[12px]">Standalone Tables</Fit>
      </div>
      <div className="ml-[48px] flex h-[53px] shrink-0 items-center border-[2px] border-[#1b81ce] bg-[#c6dcf0] pl-[2px]">
        <TableIcon className="h-[33px] w-[33px]" />
        <Fit w={228} className="ml-[17px] pt-[1px]">BpS_ADK_Statistics</Fit>
      </div>
    </div>
  );
}

/* ---------- inset map and table ---------- */
const insetRows = [
  ["10", "1491"], ["11", "1492"], ["12", "1494"], ["13", "1495"], ["14", "1496"], ["15", "1497"], ["16", "1498"], ["17", "1499"], ["18", "1501"],
];
function InsetView() {
  return (
    <div className="flex w-[1067px] shrink-0 flex-col bg-[#ebebeb] pl-[17px] text-[26px] leading-none text-[#4c4c4c]">
      <div className="flex h-[51px] shrink-0 border-b-[6px] border-[#d1d2d7]">
        <div className="flex w-[168px] items-center bg-[#d3d4d8] pt-[2px] pl-[13px]">
          <MapIcon />
          <Fit w={54} className="ml-[11px]">Map</Fit>
          <Cross className="mb-[4px] ml-[22px] h-[20px] w-[22px]" color="#777" />
        </div>
        <div className="flex items-center pt-[2px] pl-[15px] text-[#2c2c2c]">
          <MapIcon />
          <Fit w={60} className="ml-[11px]">Main</Fit>
        </div>
      </div>
      <div className="relative h-[908px] shrink-0">
        <StreetMap />
        <div className="absolute top-[16px] left-[527px] w-[90px] text-center text-[19px] leading-[25.400px] font-semibold tracking-[1px] text-[#a0a6a9] italic">
          Big<br />Rideau<br />Lake
        </div>
        <div className="absolute top-[114px] left-[855px] text-[20px] font-semibold text-[#5a5a5a]"><Fit w={103}>Brockville</Fit></div>
        <div className="absolute top-[660px] left-[-10px] text-[20px] font-semibold text-[#5a5a5a]"><Fit w={62}>eville</Fit></div>
      </div>
      <div className="flex h-[56px] shrink-0 items-start border-b-[3px] border-[#d8d8d8] bg-[#f7f9f9] pt-[2px] pl-[11px]">
        <div className="flex h-[50px] w-[300px] items-center border-[2px] border-[#888] bg-white pl-[10px] text-[#2c2c2c]">
          <Fit w={132}>1:1,144,138</Fit>
        </div>
      </div>
      <div className="mt-[14px] flex h-[53px] shrink-0 border-b-[4px] border-[#0a7bcd]">
        <div className="flex w-[260px] items-center rounded-t-[6px] bg-[#0a7bcd] pt-[3px] pl-[14px] text-white">
          <TableIcon className="h-[33px] w-[34px]" />
          <Fit w={112} className="ml-[13px]">BpS_ADK</Fit>
        </div>
      </div>
      <div className="mt-[7px] ml-[4px] flex h-[64px] shrink-0 items-center border-b-[2px] border-[#cfcfd2] bg-[#eff0f3] pl-[11px] text-[#444]">
        <Fit w={66} className="font-bold">Field:</Fit>
        <TableIcon kind="add" className="ml-[17px] h-[35px] w-[34px]" />
        <Fit w={60} className="ml-[10px]">Add</Fit>
      </div>
      <div className="mt-[4px] ml-[4px] flex h-[54px] shrink-0">
        <div className="flex w-[52px] items-end justify-end bg-white pr-[7px] pb-[6px]">
          <svg viewBox="0 0 20 21" className="h-[21px] w-[20px]"><path d="M20 0v21H0z" fill="#c5c5c5" /></svg>
        </div>
        <div className="flex items-center pt-[2px] pl-[11px] text-[26px] font-bold text-[#444]"><Fit w={130}>OBJECTID</Fit></div>
      </div>
      {insetRows.map(([i, id], n) => (
        <div key={i} className={`ml-[4px] flex shrink-0 ${n === 0 ? "h-[42px]" : "h-[55.900px]"}`}>
          <div className={`flex w-[52px] shrink-0 items-center border-r-[2px] border-b-[2px] border-[#d6d6d6] pl-[11px] ${n === 0 ? "pb-[14px]" : "pb-[2px]"}`}><Fit w={27}>{i}</Fit></div>
          <div className={`flex w-[154px] shrink-0 items-center border-r-[2px] border-b-[2px] border-[#d6d6d6] pl-[12px] ${n === 0 ? "pb-[12px]" : ""} ${n % 2 ? "bg-white" : ""}`}><Fit w={55}>{id}</Fit></div>
          {n === 8 ? (
            <>
              <div className="flex w-[134px] shrink-0 items-center justify-end border-r-[2px] border-b-[2px] border-[#d6d6d6] pr-[11px]"><Fit w={13}>1</Fit></div>
              <div className="flex w-[144px] shrink-0 items-center justify-end border-r-[2px] border-b-[2px] border-[#d6d6d6] pr-[8px]"><Fit w={70}>14900</Fit></div>
              <div className="flex w-[301px] shrink-0 items-center border-r-[2px] border-b-[2px] border-[#d6d6d6] pl-[11px]"><Fit w={28}>65</Fit></div>
              <div className="flex grow items-center border-b-[2px] border-[#d6d6d6] pl-[12px]"><Fit w={149}>14900_65_66</Fit></div>
            </>
          ) : (
            <div className={`grow border-b-[2px] border-[#d6d6d6] ${n % 2 ? "bg-white" : ""}`} />
          )}
        </div>
      ))}
    </div>
  );
}

/* ---------- summary statistics dialog ---------- */
function Combo({ t = "", w = 0, className = "" }: { t?: string; w?: number; className?: string }) {
  return (
    <div className={`flex h-[49px] shrink-0 items-center border-[2px] border-[#8c8c8c] bg-white pr-[10px] pl-[9px] text-[#2c2c2c] ${className}`}>
      {t && <Fit w={w} className="pt-[2px]">{t}</Fit>}
      <Chevron className="ml-auto h-[8px] w-[13px]" sw={3} />
    </div>
  );
}
function SummaryDialog() {
  return (
    <div className="absolute top-[321px] left-[949px] flex h-[1330px] w-[897px] flex-col bg-[#f8faf9] pl-[41px] text-[26px] leading-none text-[#505050] shadow-[0_4px_26px_rgba(0,0,0,0.4)]">
      <div className="flex h-[60px] shrink-0 items-center pr-[26px] text-[31px] text-[#1580c8]">
        <Fit w={279} className="-ml-[23px]">Summary Statistics</Fit>
        <Fit w={19} className="ml-auto text-[34px] text-[#666]">?</Fit>
        <Cross className="mb-[3px] ml-[46px] h-[20px] w-[22px]" color="#777" />
      </div>
      <div className="h-[57px] shrink-0 pt-[27px]"><Fit w={131} className="-ml-[1px]">Input Table</Fit></div>
      <div className="flex shrink-0 items-center">
        <Combo t="BpS_ADK" w={110} className="mr-[16px] w-[774px]" />
        <Folder />
      </div>
      <div className="flex h-[46px] shrink-0 items-center pt-[12px]">
        <svg viewBox="0 0 28 29" className="mr-[7px] -ml-[36px] h-[29px] w-[28px]">
          <path d="M14 1L1 28h26z" fill="#f7c48b" stroke="#f0b06b" strokeWidth="1.500" strokeLinejoin="round" />
          <path d="M14 9v10M14 21.500v4" stroke="#555" strokeWidth="3.500" />
        </svg>
        <Fit w={153}>Output Table</Fit>
      </div>
      <div className="flex shrink-0 items-center">
        <div className="mr-[16px] flex h-[48px] w-[774px] items-center border-[2px] border-[#8c8c8c] bg-white pt-[2px] pl-[9px] text-[#555]">
          <Fit w={222}>BpS_ADK_Statistics</Fit>
        </div>
        <Folder />
      </div>
      <div className="flex h-[48px] shrink-0 items-center pt-[10px]"><Fit w={178} className="-ml-[1px]">Statistics Fields</Fit></div>
      <div className="flex h-[44px] shrink-0 items-center">
        <Fit w={56} className="-ml-[1px] mt-[3px]">Field</Fit>
        <div className="-mt-[4px] ml-[16px] flex w-[345px] items-center gap-[12px]"><CircleChevron /><Gear /></div>
        <Fit w={155} className="-ml-[1px] -mt-[8px]">Statistic Type</Fit>
      </div>
      <div className="grid w-[832px] shrink-0 grid-cols-[355px_411px] gap-x-[10px] gap-y-[5px] pl-[56px]">
        <Combo t="Count" w={74} />
        <Combo t="Sum" w={54} />
        <Combo />
        <Combo />
      </div>
      <div className="flex h-[59px] shrink-0 items-center pt-[10px]">
        <Fit w={119} className="-ml-[1px] mt-[3px]">Case Field</Fit>
        <div className="ml-[16px] flex items-center gap-[13px]"><CircleChevron /><Gear /></div>
      </div>
      <div className="flex w-[832px] shrink-0 flex-col gap-[5px] pl-[56px]">
        <Combo t="BPS_NAME" w={132} />
        <Combo />
      </div>
      <div className="mt-auto mb-[20px] ml-[674px] flex h-[53px] w-[158px] shrink-0 items-center justify-center border-[2px] border-[#555] bg-white">
        <Fit w={37}>OK</Fit>
      </div>
    </div>
  );
}

function Inset() {
  return (
    <div className="absolute top-0 left-0 h-[1708px] w-[1854px] overflow-hidden bg-[#ebebeb]">
      <div className="flex h-full pt-[5px]">
        <ContentsPane />
        <InsetView />
      </div>
      <SummaryDialog />
      <div className="absolute top-0 left-0 h-[1661px] w-[1846px] border-t-[5px] border-r-[10px] border-b-[10px] border-l-[5px] border-black" />
    </div>
  );
}
function PenArrow() {
  const d = "M994 574Q970 612 935 645Q905 690 880 710Q835 750 808 789Q780 830 752 851Q710 900 690 945L676 960M648 889Q652 930 664 958Q720 968 757 949";
  return (
    <svg viewBox="600 530 440 480" className="absolute top-[530px] left-[600px] h-[480px] w-[440px]" fill="none" strokeLinecap="round" strokeLinejoin="round">
      <path d={d} stroke="#fff" strokeWidth="38" />
      <path d={d} stroke="#000" strokeWidth="34" />
      <path d="M664 955L690 950L680 930z" fill="#000" stroke="#000" strokeWidth="14" />
    </svg>
  );
}

export default function App() {
  return (
    <div className="h-[2304px] w-[4096px] overflow-hidden">
      <div className="relative flex h-[2475px] w-[4400px] flex-col overflow-hidden bg-[#eaeaea] font-['Open_Sans','Noto_Sans',sans-serif] [zoom:0.930909]">
        <LandCoverMap />
        <StatusBar />
        <div className="h-[115px] shrink-0" />
        <div className="h-[10px] shrink-0 bg-[#1b87d0]" />
        <div className="h-[10px] shrink-0 bg-[#dedede]" />
        <div className="flex h-[114px] shrink-0 items-center border-b-[3px] border-[#cfcfd2] bg-[#eef0f2] pl-[1866px] text-[48px] text-[#555]">
          <Fit w={142}>Switch</Fit>
          <svg viewBox="0 0 100 54" className="ml-[36px] h-[54px] w-[100px]" fill="none" stroke="#bcbcbc" strokeWidth="3">
            <path d="M2 2h96v50H2zM2 14h96M2 27h96M2 40h96" />
          </svg>
        </div>
        <div className="h-[10px] shrink-0 border-b-[3px] border-[#cfcfd2]" />
        <MainTable />
        <div className="flex h-[66px] shrink-0 items-start pt-[15px] pl-[26px]">
          <div className="h-[38px] w-[1834px] rounded-full bg-[#b3b3b3]" />
        </div>
        <div className="h-[7px] shrink-0 bg-[#dcdcdc]" />
        <FooterBar />
        <div className="h-[7px] shrink-0 bg-[#dedfe1]" />
        <div className="h-[15px] shrink-0" />
        <div className="flex h-[10px] shrink-0 bg-[#3a3a3a] pl-[1054px]">
          <div className="w-[196px] bg-[#666]" />
        </div>
        <ContextMenu />
        <Tooltip />
        <Inset />
        <PenArrow />
      </div>
    </div>
  );
}
